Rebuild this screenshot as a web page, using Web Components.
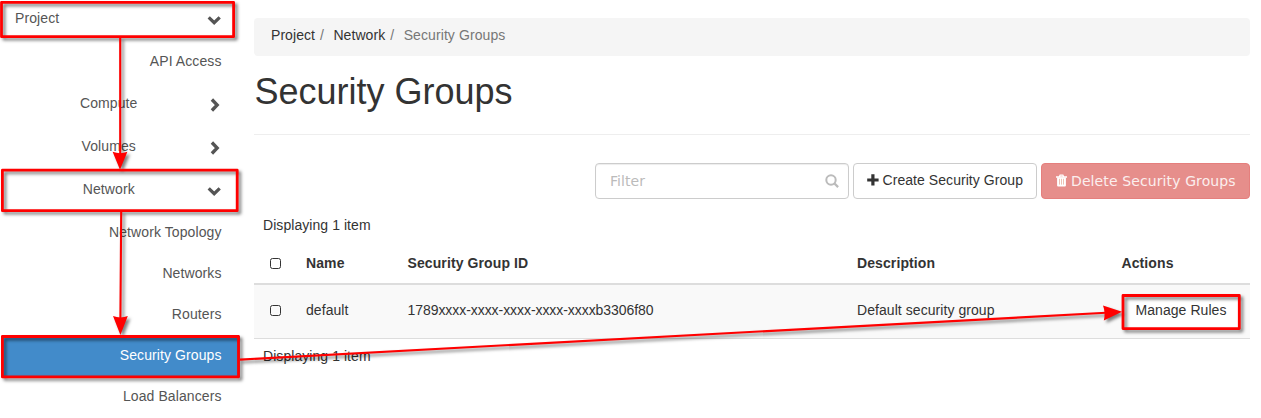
<!DOCTYPE html>
<html lang="en">
<head>
<meta charset="utf-8">
<title>Security Groups</title>
<style>
html,body{margin:0;background:#fff;height:418px;overflow:hidden}
body{font:14px/20px "Liberation Sans",Arial,sans-serif;letter-spacing:.06px;color:#333}
</style>
</head>
<body>
<horizon-app></horizon-app>
<script>
function define(name, html) {
  const t = document.createElement('template');
  t.innerHTML = html;
  customElements.define(name, class extends HTMLElement {
    constructor() {
      super();
      this.attachShadow({mode: 'open'}).append(t.content.cloneNode(true));
    }
  });
}

define('nav-item', `
<style>
:host{display:flex;align-items:center;justify-content:flex-end;box-sizing:border-box;height:41px;padding-right:18.5px;color:#555;white-space:nowrap;letter-spacing:.09px}
svg{display:none;width:14px;height:14px;flex:none;transform:translate(-.8px,2px)}
.label{display:block}
:host([group]){height:43px;padding-left:10px}
:host([group]) .label{flex:1;text-align:center}
:host([root]){height:40px;padding-left:15px;padding-bottom:4px}
:host([root]) .label{flex:1}
:host([group]) svg,:host([root]) svg{display:block}
:host([group]:not([open])) svg{transform:translate(-.5px,2px) rotate(-90deg)}
:host([lead]){height:42px;padding-top:2px}
:host([active]){background:#428bca;color:#fff;margin:2px 0 -2px 3px;padding-bottom:4px}
</style>
<span class="label"><slot></slot></span>
<svg viewBox="0 0 14 14"><path d="M1.5 4.4 7 9.7l5.5-5.3" fill="none" stroke="#555" stroke-width="3.3"/></svg>
`);

define('side-nav', `
<style>:host{display:block;width:240px}nav{display:flex;flex-direction:column}</style>
<nav>
<nav-item root open>Project</nav-item>
<nav-item>API Access</nav-item>
<nav-item group>Compute</nav-item>
<nav-item group>Volumes</nav-item>
<nav-item group open>Network</nav-item>
<nav-item lead>Network Topology</nav-item>
<nav-item>Networks</nav-item>
<nav-item>Routers</nav-item>
<nav-item active>Security Groups</nav-item>
<nav-item>Load Balancers</nav-item>
</nav>
`);

define('bread-crumb', `
<style>
:host{display:flex;box-sizing:border-box;height:38px;padding:7px 17px;background:#f5f5f5;border-radius:4px;color:#333}
i{font-style:normal;color:#777;padding:0 9.5px 0 5px}
.last{color:#777;letter-spacing:.09px}
</style>
<span>Project</span><i>/</i><span>Network</span><i>/</i><span class="last">Security Groups</span>
`);

define('filter-box', `
<style>
:host{display:flex;align-items:center;justify-content:space-between;box-sizing:border-box;width:254px;height:36px;padding:0 9px 0 14px;border:1px solid #ccc;border-radius:4px;box-shadow:inset 0 1px 1px rgba(0,0,0,.075);font-family:"DejaVu Sans",sans-serif;color:#bbb}
svg{display:block}
</style>
<span>Filter</span>
<svg width="14" height="14" viewBox="0 0 14 14" fill="none" stroke="#bbb" stroke-width="2"><circle cx="6" cy="6" r="4.7"/><path d="m9.5 9.5 3.6 3.6" stroke-width="2.3"/></svg>
`);

define('create-button', `
<style>
:host{display:flex;align-items:center;box-sizing:border-box;width:184px;height:36px;padding:0 0 2px 13px;border:1px solid #ccc;border-radius:4px;white-space:nowrap}
svg{margin-right:3.5px}
</style>
<svg width="12" height="12" viewBox="0 0 12 12"><path d="M4.3.3h3.2v4.1h4.1v3.2H7.5v4H4.3v-4H.2V4.4h4.1z" fill="#333"/></svg>
<slot></slot>
`);

define('delete-button', `
<style>
:host{display:flex;align-items:center;box-sizing:border-box;width:209px;height:36px;padding-left:13.5px;border:1px solid #e57f7d;border-radius:4px;background:#e68e8b;color:#fbeeee;font-family:"DejaVu Sans",sans-serif;letter-spacing:.11px;white-space:nowrap}
svg{margin:0 4.5px 1px 0}
</style>
<svg width="11" height="13" viewBox="0 0 11 13"><path d="M0 3h11M3.4 2.7l.7-1.6h2.8l.7 1.6" fill="none" stroke="#fff" stroke-width="1.3"/><path d="M1.1 3.4h8.8v8a1 1 0 0 1-1 1H2.1a1 1 0 0 1-1-1z" fill="#fff"/><path d="M3.5 4.8v5.8M5.5 4.8v5.8M7.5 4.8v5.8" stroke="#e9b2a0" stroke-width=".8"/></svg>
<slot></slot>
`);

define('check-box', `
<style>:host{display:block;box-sizing:border-box;width:11px;height:11px;margin:1px 0 0 .5px;border:1px solid #333;border-radius:2.5px}</style>
`);

define('groups-table', `
<style>
:host{display:block}
.row{display:grid;grid-template-columns:36.5px 101.5px 449.5px 264.5px 1fr;align-items:center;padding-left:15.5px;box-sizing:border-box}
.head{height:57px;margin-top:-15px;padding-top:15px;padding-bottom:1px;border-bottom:2px solid #ddd;font-weight:700;letter-spacing:.1px}
.body{height:54px;padding-bottom:3px;background:#f9f9f9;border-bottom:1px solid #ddd}
.note{height:36px;box-sizing:border-box;padding:8px 9px}
.foot{padding-top:7px}
.id{letter-spacing:-.06px}
.action{display:block;width:115px;height:33px;box-sizing:border-box;padding:4px 0 0 13px;background:#fff;margin-left:1px;position:relative;top:2px;white-space:nowrap}
</style>
<div class="note">Displaying 1 item</div>
<div class="row head"><check-box></check-box><span>Name</span><span>Security Group ID</span><span>Description</span><span>Actions</span></div>
<div class="row body"><check-box></check-box><span>default</span><span class="id">1789xxxx-xxxx-xxxx-xxxx-xxxxb3306f80</span><span>Default security group</span><span class="action">Manage Rules</span></div>
<div class="note foot">Displaying 1 item</div>
`);

define('main-panel', `
<style>
:host{display:block;width:996px;margin-left:14px;padding-top:18px}
h1{margin:0;height:79px;box-sizing:border-box;padding:16px 0 0 .4px;font:400 36px/40px "Liberation Sans",Arial,sans-serif;letter-spacing:0;border-bottom:1px solid #eee}
.bar{display:flex;justify-content:flex-end;gap:4px;margin:28px 0 8px}
</style>
<bread-crumb></bread-crumb>
<h1>Security Groups</h1>
<div class="bar"><filter-box></filter-box><create-button>Create Security Group</create-button><delete-button>Delete Security Groups</delete-button></div>
<groups-table></groups-table>
`);

define('guide-overlay', `
<style>:host{position:absolute;inset:0;pointer-events:none}svg{display:block}</style>
<svg width="1261" height="418" viewBox="0 0 1261 418">
<defs><filter id="s" filterUnits="userSpaceOnUse" x="-10" y="-10" width="1280" height="440" color-interpolation-filters="sRGB"><feDropShadow dx="2.5" dy="2.5" stdDeviation="1.5" flood-color="#000" flood-opacity=".5"/></filter></defs>
<g filter="url(#s)" fill="none" stroke="#f00" stroke-width="2.8" stroke-linejoin="round">
<path d="M1.5 2.3H233.6V36.7H1.5z"/>
<path d="M2.4 170.2H237.2V210.7H2.4z"/>
<path d="M2.4 336.5H238.5V376.9H2.4z"/>
<path d="M1123 295.5H1239.3V328.6H1123z"/>
<g stroke-width="2.1"><path d="M120.2 38V155M121.2 212 120.4 318M240 359.6 1106 312.8"/></g>
<g fill="#f00" stroke="none"><path d="M112.6 151.8q7.5 2.8 14.8 0L120 169.8z"/><path d="M113 316q7.5 2.8 14.8 0L120.4 335z"/><path d="M1103 305.5q2.7 7.2.8 15L1122 311.8z"/></g>
</g>
</svg>
`);

define('horizon-app', `
<style>:host{display:flex;position:relative;width:1261px;height:418px;overflow:hidden}</style>
<side-nav></side-nav><main-panel></main-panel><guide-overlay></guide-overlay>
`);
</script>
</body>
</html>
